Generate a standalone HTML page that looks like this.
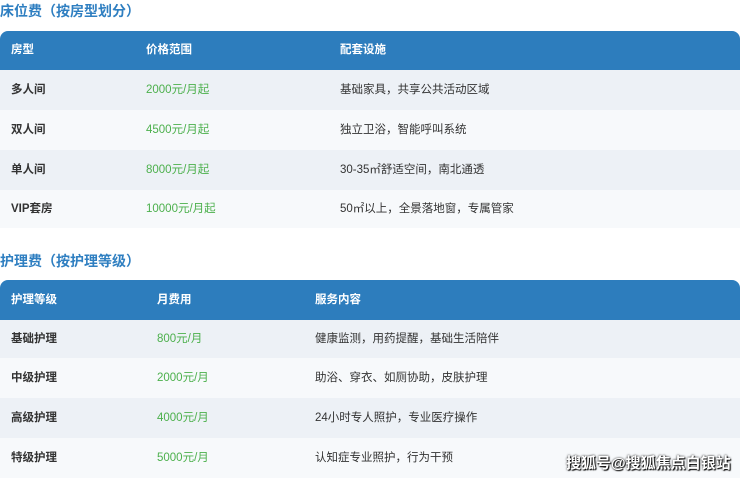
<!DOCTYPE html><html><head><meta charset="utf-8"><style>
body{margin:0;width:740px;height:479px;background:#fff;font-family:"Liberation Sans","Noto Sans CJK SC",sans-serif;overflow:hidden;position:relative}
.t{position:absolute;left:0;font-size:14px;font-weight:bold;color:#2f7fc1}
.tb{position:absolute;left:0;width:740px;border-radius:8px 8px 0 0;overflow:hidden}
.r{position:relative;height:40px;font-size:11.5px;color:#333}
.r span{position:absolute;top:0;line-height:40px}
.h{background:#2d7dbd;color:#fff;font-weight:bold}
.a{background:#edf1f6}.b{background:#f7f9fb}
.g{color:#4cb04c}
.wm{position:absolute;left:566px;top:452px;font-size:15px;font-weight:bold;color:#fff;text-shadow:0 0 2px #000,1px 1px 1px #000}
</style></head><body>
<div class="t" style="top:1px">床位费（按房型划分）</div>
<div class="tb" style="top:31px">
<div class="r h" style="height:39px"><span style="left:11px;line-height:39px">房型</span><span style="left:146px;line-height:39px">价格范围</span><span style="left:340px;line-height:39px">配套设施</span></div>
<div class="r a"><span style="left:11px;font-weight:bold">多人间</span><span class="g" style="left:146px">2000元/月起</span><span style="left:340px">基础家具，共享公共活动区域</span></div>
<div class="r b"><span style="left:11px;font-weight:bold">双人间</span><span class="g" style="left:146px">4500元/月起</span><span style="left:340px">独立卫浴，智能呼叫系统</span></div>
<div class="r a"><span style="left:11px;font-weight:bold">单人间</span><span class="g" style="left:146px">8000元/月起</span><span style="left:340px">30-35㎡舒适空间，南北通透</span></div>
<div class="r b" style="height:38px"><span style="left:11px;font-weight:bold;line-height:38px">VIP套房</span><span class="g" style="left:146px;line-height:38px">10000元/月起</span><span style="left:340px;line-height:38px">50㎡以上，全景落地窗，专属管家</span></div>
</div>
<div class="t" style="top:251px">护理费（按护理等级）</div>
<div class="tb" style="top:280px">
<div class="r h"><span style="left:11px">护理等级</span><span style="left:157px">月费用</span><span style="left:315px">服务内容</span></div>
<div class="r a" style="height:38px"><span style="left:11px;font-weight:bold;line-height:38px">基础护理</span><span class="g" style="left:157px;line-height:38px">800元/月</span><span style="left:315px;line-height:38px">健康监测，用药提醒，基础生活陪伴</span></div>
<div class="r b"><span style="left:11px;font-weight:bold">中级护理</span><span class="g" style="left:157px">2000元/月</span><span style="left:315px">助浴、穿衣、如厕协助，皮肤护理</span></div>
<div class="r a"><span style="left:11px;font-weight:bold">高级护理</span><span class="g" style="left:157px">4000元/月</span><span style="left:315px">24小时专人照护，专业医疗操作</span></div>
<div class="r b"><span style="left:11px;font-weight:bold">特级护理</span><span class="g" style="left:157px">5000元/月</span><span style="left:315px">认知症专业照护，行为干预</span></div>
</div>
<div class="wm">搜狐号@搜狐焦点白银站</div>
</body></html>
